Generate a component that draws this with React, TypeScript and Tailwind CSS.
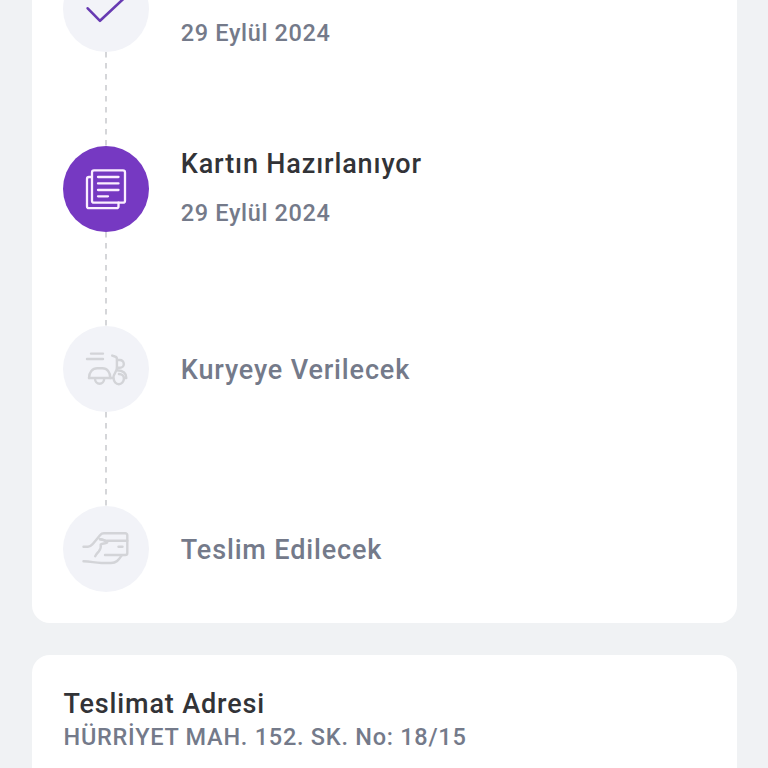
import type { ReactNode } from "react";
import clsx from "clsx";

interface Step {
  id: string;
  title?: string;
  date?: string;
  status: "done" | "active" | "pending";
  icon: ReactNode;
}

const CheckIcon = () => (
  <g strokeWidth="2.6">
    <path d="M24.7 42.3 37 54.8 64 29.5" />
  </g>
);

const DocumentIcon = () => (
  <g strokeWidth="2.3">
    <rect x="29" y="24.4" width="33" height="32.3" rx="2" />
    <path d="M29 31h-3a2 2 0 0 0-2 2v27.2a2 2 0 0 0 2 2H53.5a2 2 0 0 0 2-2v-3.5" />
    <path d="M35 31h20.500M35 37.4h20.500M35 44h20.500M35 50.3h10" />
  </g>
);

const ScooterIcon = () => (
  <g strokeWidth="2.4">
    <path d="M28 27.6h12M24 33h16" />
    <path d="M26 52c0-5.600 3.400-9.700 8.300-9.700h5.200c4.700 0 7.800 4 7.800 9.700" />
    <path d="M26 52H50.300c.2-4.600 3.600-6 3.600-10V33c0-1.500-.7-2.200-2-2.500L49.200 29.600" />
    <path d="M54 34h2.900a3.900 3.900 0 0 1 0 7.800H54" />
    <path d="M54 44.300c5.600.2 9.300 2.800 9.300 7.700h-2.300" />
    <path d="M32 52.500a4.600 5.300 0 0 0 9.200 0" />
    <path d="M50.700 52.500a5.100 5.700 0 0 0 10.200 0c0-2.700-2.200-4.500-5-4.500" />
  </g>
);

const CardInHandIcon = () => (
  <g strokeWidth="2.4">
    <path d="M20.500 40.700h4.500c2.500 0 3.500-1.500 5-3L37 29.200c1.200-1.400 2.400-1.900 4-1.900h21.300a2 2 0 0 1 2 2V47a2 2 0 0 1-2 2H42" />
    <path d="M37 33.200 43.500 34.800H64.300" />
    <path d="M37 33.200c2.800 0 5 1 7.200 3.200-2.200 1.500-4.500.8-6.500 2.200.8 3.400-.3 4.900-2 7-1.700 1.800-2.500 2.500-3.500 4.600" />
    <path d="M20.500 55.300c8 0 10 1.500 18 1.700h9.500c5.500 0 7.500-3 10.700-7.600" />
    <path d="M55.500 40.800h4" />
  </g>
);

const STEPS: Step[] = [
  { id: "approved", date: "29 Eylül 2024", status: "done", icon: <CheckIcon /> },
  {
    id: "preparing",
    title: "Kartın Hazırlanıyor",
    date: "29 Eylül 2024",
    status: "active",
    icon: <DocumentIcon />,
  },
  { id: "courier", title: "Kuryeye Verilecek", status: "pending", icon: <ScooterIcon /> },
  { id: "delivery", title: "Teslim Edilecek", status: "pending", icon: <CardInHandIcon /> },
];

const Connector = () => (
  <svg width="2" height="94" viewBox="0 0 2 94" className="shrink-0">
    <path d="M1 0V94" stroke="#c4c5c9" strokeWidth="1.4" strokeDasharray="5.5 5.500" />
  </svg>
);

const TimelineStep = ({ step, last }: { step: Step; last: boolean }) => (
  <li className="flex gap-8">
    <div className="flex w-[86px] flex-col items-center">
      <div
        className={clsx(
          "size-[86px] shrink-0 rounded-full",
          step.status === "active" ? "bg-[#7639c2]" : "bg-[#f2f3f8]"
        )}
      >
        <svg
          viewBox="0 0 86 86"
          fill="none"
          strokeLinecap="round"
          strokeLinejoin="round"
          className={clsx(
            "size-full",
            step.status === "done" && "stroke-[#673ab2]",
            step.status === "active" && "stroke-[#fbeeff]",
            step.status === "pending" && "stroke-[#d3d4d8]"
          )}
        >
          {step.icon}
        </svg>
      </div>
      {!last && <Connector />}
    </div>
    <div
      className={clsx(
        "flex h-[86px] flex-col justify-center",
        step.status === "pending" ? "pt-px" : "gap-[17px] pb-px"
      )}
    >
      <h3
        className={clsx(
          "h-8 text-[27px] leading-8 font-medium tracking-[0.85px]",
          step.status === "pending" ? "text-[#747a8a]" : "text-[#323337]"
        )}
      >
        {step.title}
      </h3>
      {step.date && (
        <p className="h-8 text-[23.5px] leading-8 font-medium tracking-[0.65px] text-[#747a8a]">{step.date}</p>
      )}
    </div>
  </li>
);

const App = () => {
  return (
    <div className="flex h-screen flex-col gap-8 overflow-hidden bg-[#f0f2f4] pr-[31px] pl-[31.5px] font-['Roboto',sans-serif]">
      <section className="flex h-[623px] shrink-0 flex-col justify-end rounded-b-[18px] bg-white pr-8 pb-[31px] pl-[31.300px]">
        <ol>
          {STEPS.map((step, index) => (
            <TimelineStep key={step.id} step={step} last={index === STEPS.length - 1} />
          ))}
        </ol>
      </section>
      <section className="grow rounded-t-[18px] bg-white px-8 pt-[33px]">
        <h2 className="text-[27px] leading-8 font-medium tracking-[0.85px] text-[#323337]">Teslimat Adresi</h2>
        <p className="text-[23.5px] leading-[34px] font-medium tracking-[0.74px] text-[#747a8a]">
          HÜRRİYET MAH. 152. SK. No: 18/15
        </p>
      </section>
    </div>
  );
};

export default App;
